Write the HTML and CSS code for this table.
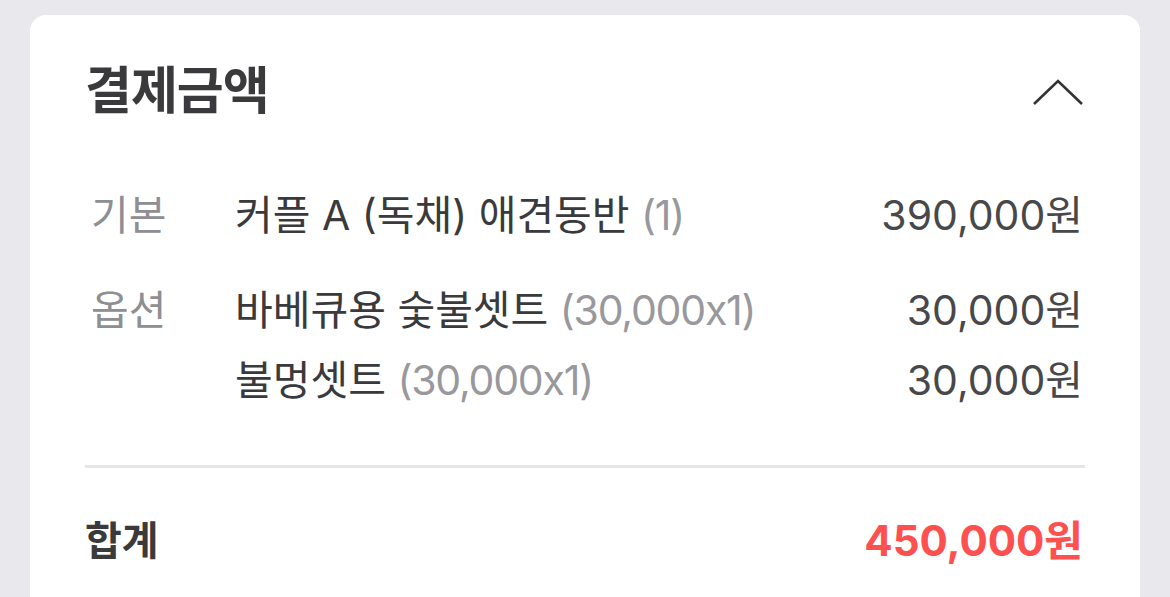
FILE: index.html
```html
<!DOCTYPE html>
<html lang="ko">
<head>
    <meta charset="UTF-8">
    <meta name="viewport" content="width=device-width, initial-scale=1.0">
    <title>결제금액</title>
    <link rel="stylesheet" href="styles.css">
</head>
<body>

<div class="card">
    <div class="card-header">
        <h2>결제금액</h2>
        <button class="toggle" aria-label="접기">
            <svg width="52" height="28" viewBox="0 0 52 28">
                <polyline points="2,25 26,2 50,25" fill="none" stroke="#333336" stroke-width="2.6"/>
            </svg>
        </button>
    </div>

    <div class="details">
        <div class="group">
            <span class="label">기본</span>
            <div class="lines">
                <div class="line">
                    <span class="name">커플 A (독채) 애견동반 <span class="sub">(1)</span></span>
                    <span class="price">390,000원</span>
                </div>
            </div>
        </div>
        <div class="group">
            <span class="label">옵션</span>
            <div class="lines">
                <div class="line">
                    <span class="name">바베큐용 숯불셋트 <span class="sub">(30,000x1)</span></span>
                    <span class="price">30,000원</span>
                </div>
                <div class="line">
                    <span class="name">불멍셋트 <span class="sub">(30,000x1)</span></span>
                    <span class="price">30,000원</span>
                </div>
            </div>
        </div>
    </div>

    <div class="total">
        <span class="total-label">합계</span>
        <span class="total-price">450,000원</span>
    </div>
</div>

</body>
</html>
```

FILE: styles.css
```css
body {
    font-family: "Inter", "Noto Sans CJK KR", sans-serif;
    background-color: #e8e8ed;
    margin: 0;
    color: #3a3a3c;
}

.card {
    background-color: white;
    margin: 15px 30px 0;
    padding: 0 55px;
    border-radius: 16px 16px 0 0;
    height: 600px;
}

.card-header {
    display: flex;
    justify-content: space-between;
    align-items: center;
    padding-top: 46px;
}

h2 {
    margin: 0;
    font-size: 51px;
    font-weight: 700;
    line-height: 60px;
    letter-spacing: -1px;
    color: #3a3a3c;
}

.toggle {
    background: none;
    border: none;
    padding: 0;
    margin: 4px 1px 0 0;
    display: flex;
    cursor: pointer;
}

.details {
    margin-top: 59px;
    padding-bottom: 50px;
    border-bottom: 3px solid #e5e5ea;
}

.group {
    display: flex;
    margin-bottom: 25px;
}

.group:last-child {
    margin-bottom: 0;
}

.label {
    width: 150px;
    flex-shrink: 0;
    padding-left: 6px;
    box-sizing: border-box;
    font-size: 41px;
    line-height: 70px;
    color: #8e8e93;
}

.lines {
    flex: 1;
}

.line {
    display: flex;
    justify-content: space-between;
    font-size: 41px;
    line-height: 70px;
}

.sub {
    color: #98989d;
    letter-spacing: -1.2px;
}

.price {
    color: #48484a;
    margin-right: 2px;
}

.total {
    display: flex;
    justify-content: space-between;
    padding-top: 38px;
    line-height: 70px;
    font-weight: 700;
}

.total-label {
    font-size: 40px;
    color: #3a3a3c;
}

.total-price {
    font-size: 42px;
    color: #ff5050;
    margin-right: 2px;
}
```
